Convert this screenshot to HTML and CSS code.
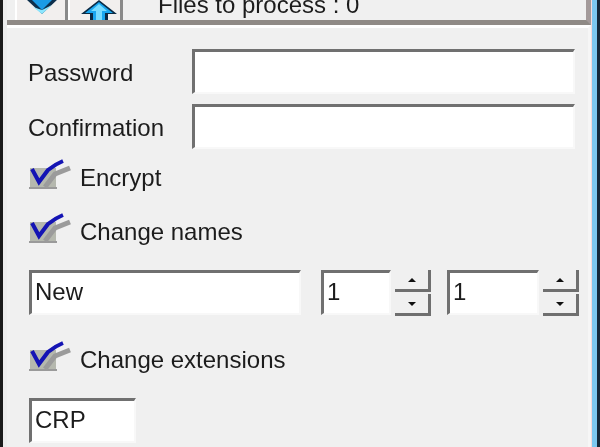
FILE: index.html
```html
<!DOCTYPE html>
<html lang="en">
<head>
<meta charset="utf-8">
<title>Files to process</title>
<link rel="stylesheet" href="styles.css">
</head>
<body>
<div class="window">
  <div class="frame-left"></div>
  <main class="content">
    <header class="toolbar">
      <button class="tool tool-down">
        <svg viewBox="0 0 34 16" width="34" height="16"><path d="M1 0H33L17 15Z" fill="#0d2f4c"/><path d="M6 0H28L17 11Z" fill="#1a9be6"/><path d="M8 8 17 15 27 6 17 11Z" fill="#8be6ff"/></svg>
      </button>
      <button class="tool tool-up">
        <svg viewBox="0 0 38 20" width="38" height="20"><path d="M19 0 37 14H28V20H10V14H1Z" fill="#0b2b46"/><path d="M19 2 33 13H25V20H13V13H5Z" fill="#1aa7f0"/><path d="M19 4 27 11H22V20H16V11H11Z" fill="#79dcff"/></svg>
      </button>
      <span class="status">Files to process : 0</span>
    </header>
    <section class="panel">
      <div class="field-row">
        <label class="field-label">Password</label>
        <div class="input wide"></div>
      </div>
      <div class="field-row second">
        <label class="field-label">Confirmation</label>
        <div class="input wide"></div>
      </div>
      <div class="check-row encrypt">
        <svg class="check" viewBox="0 3 44 30" width="44" height="30"><rect x="2" y="8" width="26" height="19" fill="#b5b8ae"/><path d="M1 28H29" stroke="#9a9a9a" stroke-width="2"/><path d="M17 27 27 14 42 8" fill="none" stroke="#9b9b9b" stroke-width="5"/><path d="M4 9 11 22 20 10C25 6 30 3 35 1" fill="none" stroke="#1414b4" stroke-width="4"/></svg>
        <span>Encrypt</span>
      </div>
      <div class="check-row names">
        <svg class="check" viewBox="0 3 44 30" width="44" height="30"><rect x="2" y="8" width="26" height="19" fill="#b5b8ae"/><path d="M1 28H29" stroke="#9a9a9a" stroke-width="2"/><path d="M17 27 27 14 42 8" fill="none" stroke="#9b9b9b" stroke-width="5"/><path d="M4 9 11 22 20 10C25 6 30 3 35 1" fill="none" stroke="#1414b4" stroke-width="4"/></svg>
        <span>Change names</span>
      </div>
      <div class="name-row">
        <div class="input name">New</div>
        <div class="input count">1</div>
        <div class="spin"><div class="spin-btn"><i class="up"></i></div><div class="spin-btn"><i class="down"></i></div></div>
        <div class="input count second-count">1</div>
        <div class="spin"><div class="spin-btn"><i class="up"></i></div><div class="spin-btn"><i class="down"></i></div></div>
      </div>
      <div class="check-row ext">
        <svg class="check" viewBox="0 3 44 30" width="44" height="30"><rect x="2" y="8" width="26" height="19" fill="#b5b8ae"/><path d="M1 28H29" stroke="#9a9a9a" stroke-width="2"/><path d="M17 27 27 14 42 8" fill="none" stroke="#9b9b9b" stroke-width="5"/><path d="M4 9 11 22 20 10C25 6 30 3 35 1" fill="none" stroke="#1414b4" stroke-width="4"/></svg>
        <span>Change extensions</span>
      </div>
      <div class="input ext-input">CRP</div>
    </section>
  </main>
  <div class="frame-right"></div>
</div>
</body>
</html>
```
FILE: styles.css
```css
html, body {
  margin: 0;
  padding: 0;
  width: 600px;
  height: 447px;
  overflow: hidden;
  background: #f0f0f0;
}
body {
  font-family: "Liberation Sans", Arial, sans-serif;
  font-size: 24px;
  color: #1c1c1c;
}
.window {
  display: flex;
  width: 600px;
  height: 447px;
  filter: blur(0.6px);
}
.frame-left {
  width: 7px;
  flex: none;
  box-sizing: border-box;
  border-left: 3px solid #1a1a1a;
  background: #ececec;
}
.content {
  width: 584px;
  flex: none;
  display: flex;
  flex-direction: column;
}
.frame-right {
  width: 9px;
  flex: none;
  box-sizing: border-box;
  background: #7cc8f0;
  border-left: 1px solid #f6dcdc;
  border-right: 3px solid #14283a;
}
.toolbar {
  height: 25px;
  box-sizing: border-box;
  display: flex;
  align-items: flex-end;
  padding-left: 8px;
  overflow: hidden;
  background: #f0f0f0;
  border-bottom: 5px solid #8f8a86;
  border-right: 5px solid #a39a9a;
  flex: none;
}
.tool {
  width: 53px;
  height: 20px;
  flex: none;
  padding: 0;
  display: flex;
  align-items: flex-end;
  justify-content: center;
  background: #f2efee;
  border: 0;
  border-right: 3px solid #8a8a8a;
  box-shadow: inset 2px 0 #fff;
}
.tool-down {
  padding: 0 0 5px 4px;
}
.tool-up {
  width: 55px;
  padding-left: 9px;
}
.tool svg {
  display: block;
}
.status {
  margin-left: 35px;
  margin-bottom: 1px;
  line-height: 28px;
  white-space: nowrap;
}
.panel {
  flex: 1;
  min-height: 0;
  box-sizing: border-box;
  padding: 21px 0 0 21px;
  background: #f0f0f0;
  border-top: 3px solid #fff;
  border-right: 3px solid #f6f6f6;
}
.field-row {
  display: flex;
  align-items: center;
  height: 45px;
}
.field-row.second {
  margin-top: 10px;
}
.field-label {
  width: 164px;
  flex: none;
  margin-top: 3px;
}
.input {
  box-sizing: border-box;
  background: #fff;
  border-style: solid;
  border-width: 3px 2px 2px 3px;
  border-color: #707070 #f8f8f8 #f8f8f8 #707070;
  line-height: 38px;
  padding-left: 3px;
  height: 45px;
}
.wide {
  width: 383px;
}
.check-row {
  display: flex;
  align-items: center;
  gap: 8px;
  height: 30px;
}
.check {
  display: block;
  flex: none;
  overflow: visible;
}
.encrypt {
  margin-top: 14px;
}
.names {
  margin-top: 24px;
}
.ext {
  margin-top: 29px;
}
.name-row {
  display: flex;
  margin-top: 23px;
  margin-left: 1px;
  height: 46px;
}
.name {
  width: 272px;
}
.count {
  width: 70px;
  margin-left: 20px;
}
.second-count {
  width: 92px;
  margin-left: 16px;
}
.spin {
  width: 36px;
  margin-left: 4px;
  display: flex;
  flex-direction: column;
  gap: 2px;
}
.spin-btn {
  flex: 1;
  display: flex;
  align-items: center;
  justify-content: center;
  background: #f0f0f0;
  border-right: 3px solid #6f6f6f;
  border-bottom: 3px solid #6f6f6f;
}
.spin-btn i {
  display: block;
  width: 0;
  height: 0;
  border-left: 4px solid transparent;
  border-right: 4px solid transparent;
}
.up {
  border-bottom: 4px solid #111;
}
.down {
  border-top: 4px solid #111;
}
.ext-input {
  width: 107px;
  margin-top: 23px;
  margin-left: 1px;
}
```
